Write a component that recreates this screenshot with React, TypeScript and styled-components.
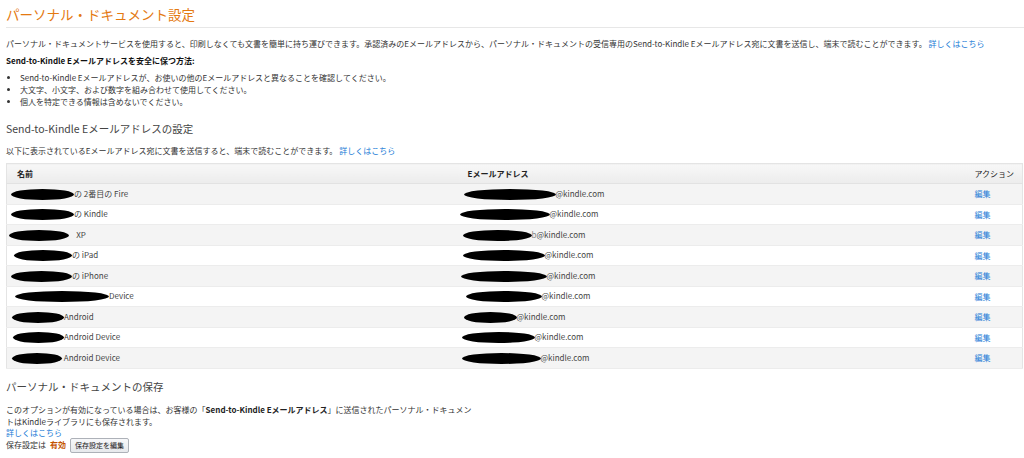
import React from "react";
import styled, { createGlobalStyle } from "styled-components";

const GlobalStyle = createGlobalStyle`
  body {
    margin: 0;
    background: #fff;
    font-family: "Noto Sans CJK JP", "Liberation Sans", sans-serif;
    color: #333;
  }
`;

type Row = {
  nameBlob: number;
  nameOffset: number;
  name: string;
  mailBlob: number;
  mailOffset: number;
  mailPrefix?: string;
};

const rows: Row[] = [
  { nameBlob: 63, nameOffset: -6, name: "の 2番目の Fire", mailBlob: 92, mailOffset: -4 },
  { nameBlob: 63, nameOffset: -6, name: "の Kindle", mailBlob: 90, mailOffset: -8 },
  { nameBlob: 60, nameOffset: -8, name: "\u00a0\u00a0\u00a0\u00a0XP", mailBlob: 69, mailOffset: -5, mailPrefix: "b" },
  { nameBlob: 58, nameOffset: -3, name: "の iPad", mailBlob: 82, mailOffset: -5 },
  { nameBlob: 61, nameOffset: -6, name: "の iPhone", mailBlob: 86, mailOffset: -7 },
  { nameBlob: 94, nameOffset: -2, name: "Device", mailBlob: 76, mailOffset: -2 },
  { nameBlob: 52, nameOffset: -5, name: "Android", mailBlob: 53, mailOffset: -4 },
  { nameBlob: 51, nameOffset: -4, name: "Android Device", mailBlob: 73, mailOffset: -6 },
  { nameBlob: 50, nameOffset: -5, name: "\u00a0Android Device", mailBlob: 79, mailOffset: -6 },
];

const App = () => {
  return (
    <Page>
      <GlobalStyle />
      <Title>パーソナル・ドキュメント設定</Title>
      <Rule />
      <Intro>
        パーソナル・ドキュメントサービスを使用すると、印刷しなくても文書を簡単に持ち運びできます。承認済みのEメールアドレスから、パーソナル・ドキュメントの受信専用のSend-to-Kindle
        Eメールアドレス宛に文書を送信し、端末で読むことができます。 <Link>詳しくはこちら</Link>
      </Intro>
      <TipTitle>Send-to-Kindle Eメールアドレスを安全に保つ方法:</TipTitle>
      <Tips>
        <li>Send-to-Kindle Eメールアドレスが、お使いの他のEメールアドレスと異なることを確認してください。</li>
        <li>大文字、小文字、および数字を組み合わせて使用してください。</li>
        <li>個人を特定できる情報は含めないでください。</li>
      </Tips>

      <Heading>Send-to-Kindle Eメールアドレスの設定</Heading>
      <SubText>
        以下に表示されているEメールアドレス宛に文書を送信すると、端末で読むことができます。 <Link>詳しくはこちら</Link>
      </SubText>

      <Table>
        <thead>
          <tr>
            <Th $w={451}>名前</Th>
            <Th $w={507}>Eメールアドレス</Th>
            <Th $w={58} $plain>アクション</Th>
          </tr>
        </thead>
        <tbody>
          {rows.map((r, i) => (
            <Tr key={i} $odd={i % 2 === 0}>
              <Td>
                <Blob $w={r.nameBlob} $offset={r.nameOffset} />
                {r.name}
              </Td>
              <Td>
                <Blob $w={r.mailBlob} $offset={r.mailOffset} />
                {r.mailPrefix ? <Faint>{r.mailPrefix}</Faint> : null}@kindle.com
              </Td>
              <Td>
                <Link>編集</Link>
              </Td>
            </Tr>
          ))}
        </tbody>
      </Table>

      <Heading $top={11}>パーソナル・ドキュメントの保存</Heading>
      <Para>
        このオプションが有効になっている場合は、お客様の「<b>Send-to-Kindle Eメールアドレス</b>」に送信されたパーソナル・ドキュメントはKindleライブラリにも保存されます。
      </Para>
      <BlockLink>詳しくはこちら</BlockLink>
      <Status>
        保存設定は <Enabled>有効</Enabled>
        <Button>保存設定を編集</Button>
      </Status>
    </Page>
  );
};
export default App;

const Page = styled.div`
  padding: 0 6px 8px 6px;
  font-size: 8px;
`;
const Title = styled.h1`
  margin: 0;
  padding-top: 5px;
  font-size: 13.5px;
  line-height: 18px;
  font-weight: normal;
  color: #e47911;
`;
const Rule = styled.div`
  height: 1px;
  background: #e7e7e7;
  margin: 4px -6px 0 0;
`;
const Link = styled.a`
  color: #1a7bd6;
  cursor: pointer;
`;
const Intro = styled.p`
  margin: 10px 0 0;
  line-height: 12px;
  white-space: nowrap;
`;
const TipTitle = styled.p`
  margin: 5px 0 0;
  line-height: 12px;
  font-weight: bold;
  color: #111;
`;
const Tips = styled.ul`
  margin: 5px 0 0;
  padding-left: 14px;
  line-height: 12px;
`;
const Heading = styled.h2<{ $top?: number }>`
  margin: ${(p) => p.$top ?? 14}px 0 0;
  font-size: 10.5px;
  line-height: 14px;
  font-weight: normal;
  color: #444;
`;
const SubText = styled.p`
  margin: 9px 0 0;
  line-height: 12px;
`;
const Table = styled.table`
  width: 1016px;
  margin-top: 6px;
  border-collapse: collapse;
  table-layout: fixed;
  border: 1px solid #e4e4e4;
`;
const Th = styled.th<{ $w: number; $plain?: boolean }>`
  box-sizing: border-box;
  width: ${(p) => p.$w}px;
  height: 20px;
  padding: 0 10px;
  text-align: left;
  font-weight: ${(p) => (p.$plain ? "normal" : "bold")};
  color: #222;
  background: linear-gradient(#f7f7f7, #ececec);
  border-bottom: 1px solid #e2e2e2;
  white-space: nowrap;
`;
const Tr = styled.tr<{ $odd: boolean }>`
  background: ${(p) => (p.$odd ? "#f4f4f4" : "#fff")};
  border-bottom: 1px solid #ececec;
`;
const Td = styled.td`
  height: 19.5px;
  padding: 0 10px;
  white-space: nowrap;
  color: #444;
`;
const Blob = styled.span<{ $w: number; $offset: number }>`
  display: inline-block;
  width: ${(p) => p.$w}px;
  height: 11px;
  margin-left: ${(p) => p.$offset}px;
  background: #000;
  border-radius: 50% / 50%;
  vertical-align: middle;
`;
const Faint = styled.span`
  color: #888;
`;
const Para = styled.p`
  margin: 10px 0 0;
  max-width: 470px;
  line-height: 12px;
  b {
    line-height: 12px;
    color: #222;
  }
`;
const BlockLink = styled(Link)`
  display: block;
  font-size: 8px;
  line-height: 10px;
`;
const Status = styled.div`
  display: flex;
  align-items: center;
  margin-top: 0;
  line-height: 14px;
`;
const Enabled = styled.span`
  color: #c45500;
  font-weight: bold;
  margin: 0 4px;
`;
const Button = styled.button`
  font-family: inherit;
  font-size: 7px;
  height: 15px;
  padding: 0 4px;
  color: #222;
  background: linear-gradient(#f7f8fa, #e7e9ec);
  border: 1px solid #adb1b8;
  border-radius: 2px;
  line-height: 12px;
`;
